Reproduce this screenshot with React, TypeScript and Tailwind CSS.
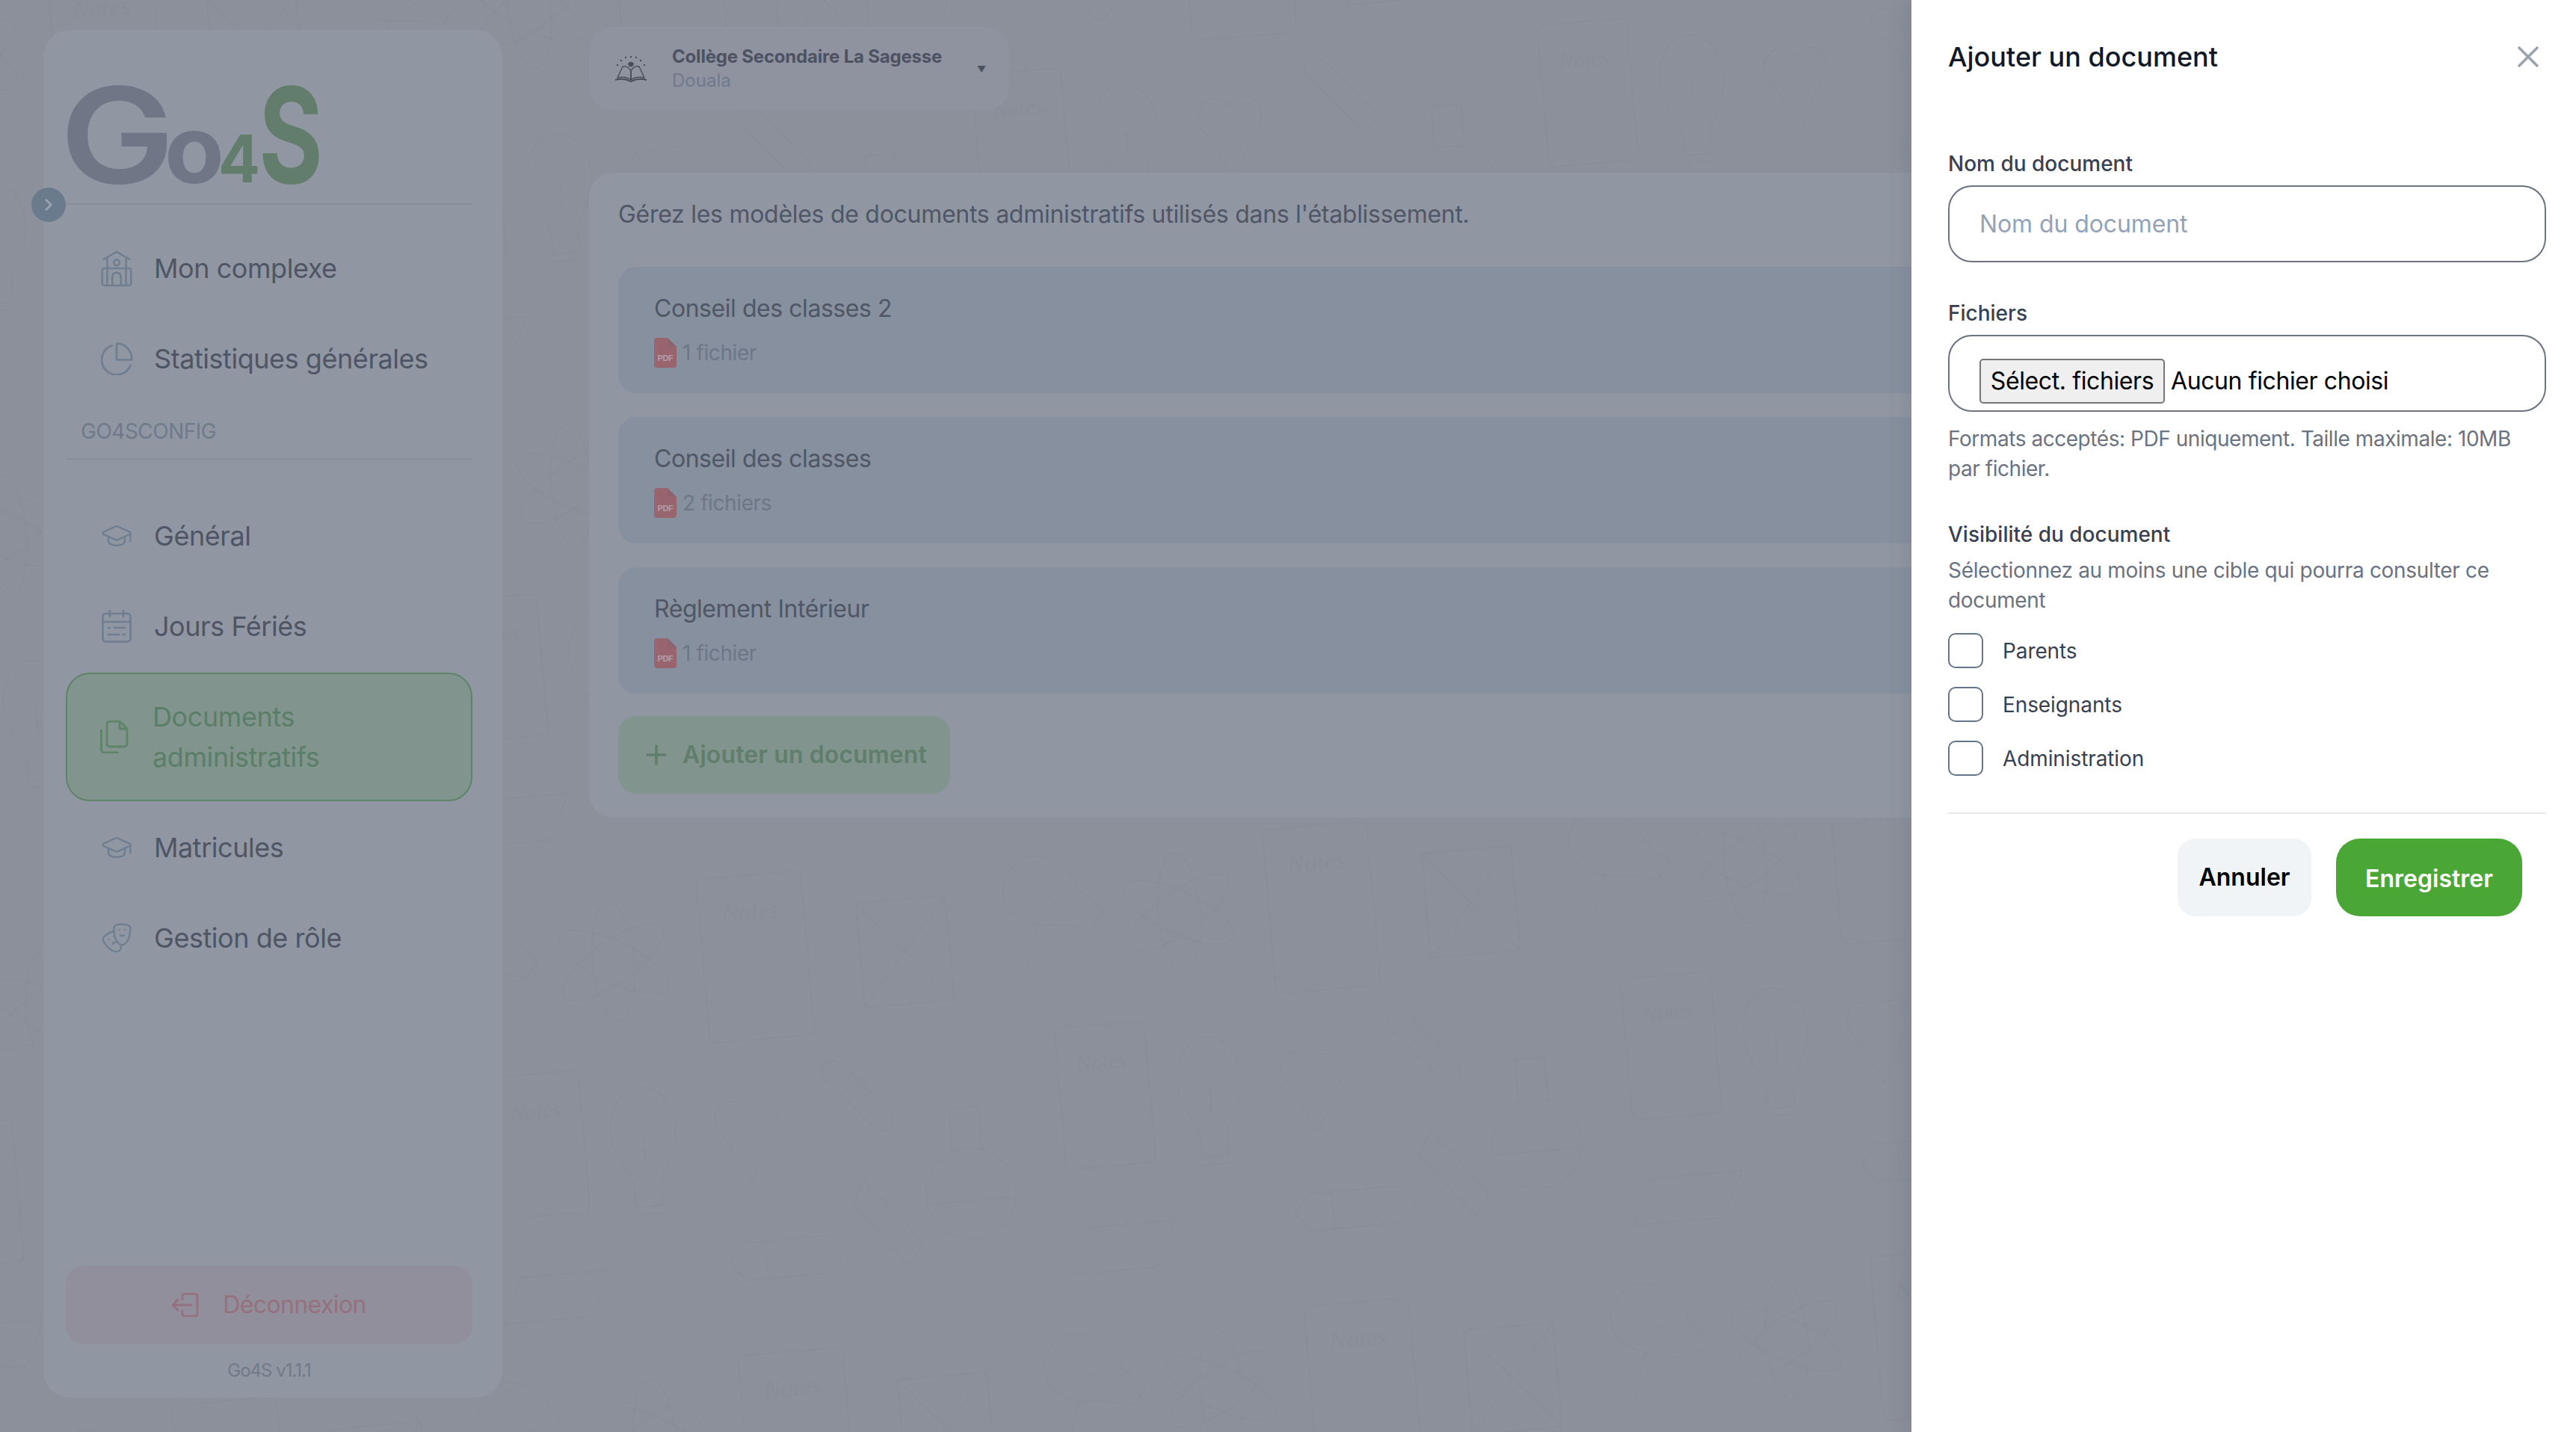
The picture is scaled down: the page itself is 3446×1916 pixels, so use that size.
import { Drama, GraduationCap, Plus, X, ChevronRight } from "lucide-react";
import type { ReactNode } from "react";

const font = "font-['Inter','Noto_Sans',sans-serif]";

const HomeIcon = () => (
  <svg viewBox="0 0 44 52" className="h-[50px] w-[44px]" fill="none" stroke="currentColor" strokeWidth="2.6" strokeLinejoin="round">
    <path d="M3 14 22 3l19 11" />
    <path d="M9 12v38M35 12v38" />
    <rect x="2" y="26" width="40" height="24" rx="3" />
    <circle cx="22" cy="18" r="4" />
    <path d="M16 50V38a6 6 0 0 1 12 0v12" />
  </svg>
);

const PieIcon = () => (
  <svg viewBox="0 0 44 44" className="h-[44px] w-[44px]" fill="none" stroke="currentColor" strokeWidth="2.6" strokeLinejoin="round">
    <path d="M17 4A20 20 0 1 0 41 30" />
    <path d="M22 1.500a20 20 0 0 1 20 22H22z" />
  </svg>
);

const CalendarIcon = () => (
  <svg viewBox="0 0 40 44" className="h-[44px] w-[40px]" fill="none" stroke="currentColor" strokeWidth="2.6" strokeLinecap="round">
    <rect x="1.500" y="5" width="37" height="37.500" rx="4" />
    <path d="M2 16h36M11 1v8M29 1v8M9 24h2M17 24h14M9 33h14M28 33h3" />
  </svg>
);

const DocsIcon = () => (
  <svg viewBox="0 0 38 44" className="h-[44px] w-[38px]" fill="none" stroke="currentColor" strokeWidth="2.800" strokeLinejoin="round">
    <path d="M9 5a4 4 0 0 1 4-4h13l10 10v20a4 4 0 0 1-4 4H13a4 4 0 0 1-4-4z" />
    <path d="M26 1v10h10" />
    <path d="M1.500 12v27a4 4 0 0 0 4 4h19" />
  </svg>
);

const LogoutIcon = () => (
  <svg viewBox="0 0 36 32" className="h-[32px] w-[36px]" fill="none" stroke="currentColor" strokeWidth="2.800" strokeLinecap="round" strokeLinejoin="round">
    <path d="M14 8V4a3 3 0 0 1 3-3h14a3 3 0 0 1 3 3v24a3 3 0 0 1-3 3H17a3 3 0 0 1-3-3v-4" />
    <path d="M26 16H2M8 9l-7 7 7 7" />
  </svg>
);

const PdfIcon = () => (
  <svg viewBox="0 0 30 40" className="h-[40px] w-[30px]">
    <path d="M4 0h14l12 12v24a4 4 0 0 1-4 4H4a4 4 0 0 1-4-4V4a4 4 0 0 1 4-4z" fill="#98656f" />
    <path d="M18 0l12 12H18z" fill="#8b6470" />
    <text x="15" y="31" textAnchor="middle" fontFamily="Liberation Sans" fontWeight="700" fontSize="11" fill="#b0a0a8">PDF</text>
  </svg>
);

const SchoolLogo = () => (
  <svg viewBox="0 0 46 36" className="h-[36px] w-[46px]" fill="none" stroke="#484e5b" strokeWidth="1.400" strokeLinejoin="round">
    <path d="M23 33C18 29 10 29 5 30L12 15c4-1 8 0 11 6 3-6 7-7 11-6l7 15c-5-1-13-1-18 3z" />
    <path d="M23 21v12M2 33c7-2 15-1 21 2 6-3 14-4 21-2" strokeWidth="2" />
    <circle cx="23" cy="12" r="2.500" fill="#484e5b" />
    <path d="M23 15l-4-4M23 15l4-4" />
    {[[23, 2], [16, 3], [30, 3], [10, 7], [36, 7], [5, 13], [41, 13]].map(([x, y]) => (
      <circle key={`${x}-${y}`} cx={x} cy={y} r="1.200" fill="#484e5b" stroke="none" />
    ))}
  </svg>
);

const Logo = () => (
  <svg viewBox="0 0 342 140" className="h-[140px] w-[342px] overflow-visible" fontFamily="Inter">
    <text x="-8" y="133" fontSize="178" fontWeight="600" fill="#6f7786" textLength="154" lengthAdjust="spacingAndGlyphs">G</text>
    <text x="132" y="133" fontSize="126" fontWeight="700" fill="#6f7786" textLength="80" lengthAdjust="spacingAndGlyphs">o</text>
    <text x="204" y="132" fontSize="88" fontWeight="700" fill="#637d6d" textLength="56" lengthAdjust="spacingAndGlyphs">4</text>
    <text x="258" y="133" fontSize="178" fontWeight="700" fill="#637d6d" textLength="86" lengthAdjust="spacingAndGlyphs">S</text>
  </svg>
);

// faint doodles behind the page
const Doodles = () => (
  <svg className="absolute inset-0 h-full w-full" aria-hidden>
    <defs>
      <pattern id="doodles" width="760" height="640" patternUnits="userSpaceOnUse" patternTransform="translate(40 -60) rotate(-5)">
        <g fill="none" stroke="#838895" strokeWidth="1.500">
          <rect x="20" y="30" width="140" height="220" rx="8" />
          <text x="50" y="90" fontFamily="Liberation Serif" fontStyle="italic" fontSize="34" fill="#838895" stroke="none">Notes</text>
          <path d="M230 80h120v140H230zM230 80l120 140M350 80 230 220" />
          <path d="M470 130c-50-10-60-70-10-90 30-8 60 20 70 50l30 30-20 22c-20-10-50-10-70-12zM480 90l40 30M470 130l-20 60" />
          <ellipse cx="660" cy="130" rx="28" ry="80" />
          <ellipse cx="660" cy="130" rx="28" ry="80" transform="rotate(60 660 130)" />
          <ellipse cx="660" cy="130" rx="28" ry="80" transform="rotate(-60 660 130)" />
          <path d="M60 340c-30-30-60 10-30 40l30 60 30-60c30-30 0-70-30-40z" />
          <path d="M190 290c40 40 40 50 60 70 16 16-6 36-22 20l-60-70c-10-14 10-30 22-20z" />
          <circle cx="350" cy="480" r="60" />
          <path d="M330 425v-60h40v60M295 490h110" />
          <rect x="480" y="270" width="120" height="190" rx="8" />
          <text x="505" y="330" fontFamily="Liberation Serif" fontStyle="italic" fontSize="30" fill="#838895" stroke="none">Notes</text>
          <path d="M680 300c-36 0-54 50-36 90l18 40v30h36v-30l18-40c18-40 0-90-36-90zM662 470h36M680 400v-40" />
          <path d="M40 520h110c40 0 40 50 0 50H40l-20-25zM70 520v50" />
          <path d="M190 480l70 90 20-30-70-90zM500 540h120l-30 60H470z" />
        </g>
      </pattern>
    </defs>
    <rect width="100%" height="100%" fill="url(#doodles)" opacity="0.4" />
  </svg>
);

const NavItem = ({ icon, children, active }: { icon: ReactNode; children: ReactNode; active?: boolean }) => (
  <div
    className={
      active
        ? "flex items-center gap-[32px] rounded-[32px] border-2 border-[#5d8468] bg-[#82948e] py-[30px] pl-[44px] pr-[20px] text-[36px] leading-[54px] tracking-[-0.4px] text-[#5a7f68]"
        : "flex items-center gap-[28px] rounded-[32px] border-2 border-transparent py-[30px] pl-[44px] pr-[20px] text-[36px] leading-[54px] tracking-[-0.45px] text-[#4e5564]"
    }
  >
    <span className={active ? "flex w-[38px] shrink-0 justify-center text-[#5d8468]" : "flex w-[44px] shrink-0 justify-center text-[#6f7d90]"}>{icon}</span>
    <span>{children}</span>
  </div>
);

const DocRow = ({ title, files }: { title: string; files: string }) => (
  <div className="h-[169px] rounded-[24px] bg-[#87909f] pl-[48px] pt-[32px]">
    <div className="text-[32px] leading-[48px] tracking-[-0.45px] text-[#4f5665]">{title}</div>
    <div className="mt-[15px] flex h-[40px] items-center gap-[8px] text-[28px] tracking-[-0.4px] text-[#6f7685]">
      <PdfIcon />
      <span>{files}</span>
    </div>
  </div>
);

const Field = ({ label, children }: { label: string; children: ReactNode }) => (
  <div>
    <div className="text-[28px] font-medium leading-[40px] text-[#374151]">{label}</div>
    <div className="mt-[9px]">{children}</div>
  </div>
);

const Target = ({ label }: { label: string }) => (
  <label className="flex h-[47px] items-center gap-[26px] text-[28px] tracking-[-0.1px] text-[#374151]">
    <input type="checkbox" className="h-[47px] w-[47px] appearance-none rounded-[10px] border-2 border-[#64748b] bg-white" />
    {label}
  </label>
);

export default function App() {
  return (
    <div className={`relative flex h-[1916px] w-[3446px] overflow-hidden bg-[#8b909b] ${font}`}>
      <Doodles />

      <aside className="relative ml-[58px] mt-[40px] flex h-[1830px] w-[614px] shrink-0 flex-col rounded-[36px] bg-[#9097a2] pl-[30px] pr-[40px]">
        <div className="mt-[72px] h-[162px] border-b-2 border-[#878d99]">
          <Logo />
        </div>
        <span className="absolute left-[-16px] top-[211px] flex h-[46px] w-[46px] items-center justify-center rounded-full bg-[#6b7b8e] text-[#9aa3ae]">
          <ChevronRight size={26} strokeWidth={2.4} />
        </span>
        <div className="mt-[26px] flex flex-col gap-[3px]">
          <NavItem icon={<HomeIcon />}>Mon complexe</NavItem>
          <NavItem icon={<PieIcon />}>Statistiques générales</NavItem>
        </div>
        <div className="mt-[20px] border-b-2 border-[#878d99] px-[20px] pb-[18px] text-[28px] leading-[36px] tracking-[-0.5px] text-[#6f7a8b]">GO4SCONFIG</div>
        <div className="mt-[43px] flex flex-col gap-[3px]">
          <NavItem icon={<GraduationCap size={50} strokeWidth={1.300} />}>Général</NavItem>
          <NavItem icon={<CalendarIcon />}>Jours Fériés</NavItem>
          <NavItem icon={<DocsIcon />} active>
            Documents
            <br />
            administratifs
          </NavItem>
          <NavItem icon={<GraduationCap size={50} strokeWidth={1.300} />}>Matricules</NavItem>
          <NavItem icon={<Drama size={52} strokeWidth={1.200} />}>Gestion de rôle</NavItem>
        </div>
        <div className="mt-auto flex h-[104px] items-center justify-center gap-[32px] rounded-[24px] bg-[#918f9b] text-[32px] tracking-[-0.6px] text-[#96707f]">
          <LogoutIcon />
          Déconnexion
        </div>
        <div className="mb-[18px] mt-[18px] text-center text-[24px] leading-[36px] tracking-[-1px] text-[#707a88]">Go4S v1.1.1</div>
      </aside>

      <main className="relative ml-[116px] w-[1900px] shrink-0 pt-[36px]">
        <div className="flex h-[111px] w-[562px] items-center rounded-[32px] bg-[#8e939f] pl-[33px]">
          <SchoolLogo />
          <div className="ml-[32px] w-[408px]">
            <div className="text-[24px] font-bold leading-[32px] tracking-[-0.2px] text-[#4c5261]">Collège Secondaire La Sagesse</div>
            <div className="text-[24px] leading-[32px] text-[#6f7a8c]">Douala</div>
          </div>
          <span className="mt-[2px] text-[12px] text-[#4c5261]">▼</span>
        </div>

        <div className="mt-[84px] rounded-[32px] bg-[#9097a2] pb-[32px] pl-[39px] pt-[32px]">
          <p className="text-[32px] leading-[48px] tracking-[-0.28px] text-[#4f5665]">Gérez les modèles de documents administratifs utilisés dans l'établissement.</p>
          <div className="mt-[46px] flex flex-col gap-[32px]">
            <DocRow title="Conseil des classes 2" files="1 fichier" />
            <DocRow title="Conseil des classes" files="2 fichiers" />
            <DocRow title="Règlement Intérieur" files="1 fichier" />
          </div>
          <div className="mt-[30px] flex h-[104px] w-[444px] items-center gap-[15px] rounded-[24px] bg-[#82948e] pl-[31px] text-[32px] font-semibold tracking-[0.1px] text-[#5f7e6c]">
            <Plus size={40} strokeWidth={2.2} />
            Ajouter un document
          </div>
        </div>
      </main>

      <div className="absolute right-0 top-0 h-full w-[889px] bg-white pl-[49px] pr-[40px] pt-[50px] shadow-[-8px_0_24px_rgba(60,65,80,0.12)]">
        <div className="flex h-[52px] items-center justify-between">
          <h2 className="text-[36px] font-medium leading-[52px] text-[#111827]">Ajouter un document</h2>
          <X size={48} strokeWidth={1.800} className="text-[#9ca3af]" />
        </div>

        <div className="mt-[97px]">
          <Field label="Nom du document">
            <input
              placeholder="Nom du document"
              className="h-[103px] w-full rounded-[32px] border-2 border-[#6b7280] px-[40px] text-[32px] tracking-[-0.1px] placeholder:text-[#94a3b8]"
            />
          </Field>
        </div>
        <div className="mt-[48px]">
          <Field label="Fichiers">
            <div className="flex h-[103px] items-start rounded-[32px] border-2 border-[#6b7280] pl-[40px] pt-[30px] text-[32px] tracking-[-0.4px] text-black">
              <span className="flex h-[60px] w-[248px] items-center justify-center rounded-[5px] border-2 border-[#767676] bg-[#efefef]">Sélect. fichiers</span>
              <span className="ml-[8px] leading-[60px]">Aucun fichier choisi</span>
            </div>
          </Field>
        </div>
        <p className="mt-[16px] text-[28px] leading-[40px] tracking-[-0.45px] text-[#6b7280]">
          Formats acceptés: PDF uniquement. Taille maximale: 10MB par fichier.
        </p>

        <div className="mt-[48px] text-[28px] font-medium leading-[40px] text-[#374151]">Visibilité du document</div>
        <p className="mt-[8px] text-[28px] leading-[40px] tracking-[-0.33px] text-[#6b7280]">Sélectionnez au moins une cible qui pourra consulter ce document</p>
        <div className="mt-[24px] flex flex-col gap-[25px]">
          <Target label="Parents" />
          <Target label="Enseignants" />
          <Target label="Administration" />
        </div>

        <div className="mt-[49px] flex justify-end gap-[33px] border-t-2 border-[#e5e7eb] pr-[32px] pt-[33px]">
          <button className="h-[104px] w-[179px] rounded-[24px] bg-[#f1f4f7] text-[32px] font-semibold text-black">Annuler</button>
          <button className="h-[104px] w-[249px] rounded-[32px] bg-[#4ba735] pt-[4px] text-[32px] font-semibold text-white">Enregistrer</button>
        </div>
      </div>
    </div>
  );
}
